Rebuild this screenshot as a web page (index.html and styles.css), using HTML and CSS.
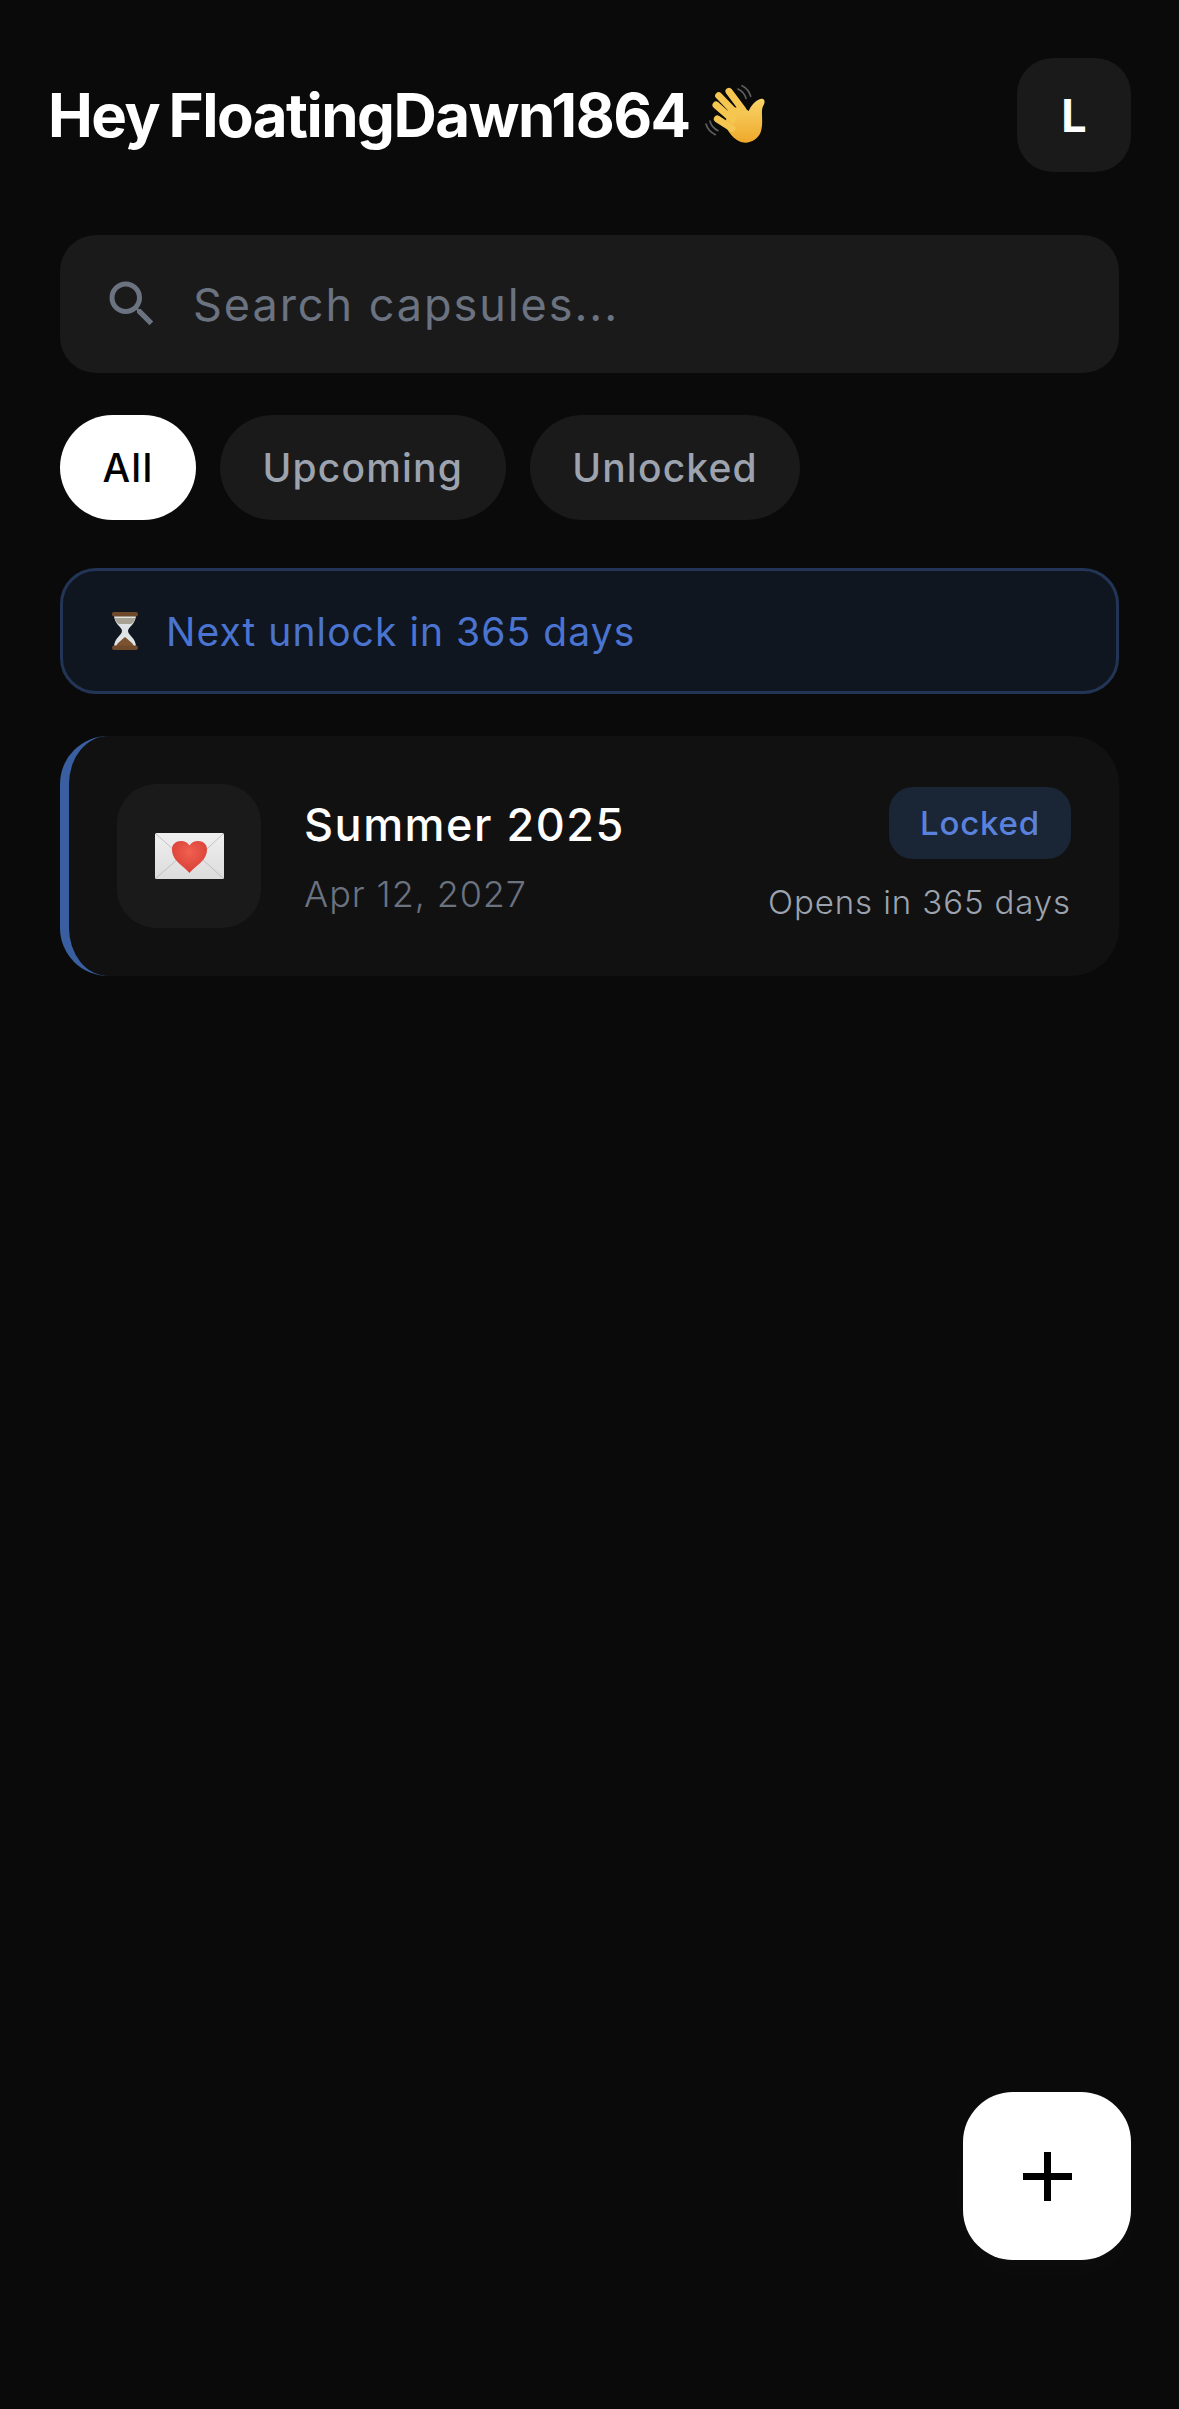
FILE: index.html
```html
<!DOCTYPE html>
<html lang="en">
<head>
    <meta charset="UTF-8">
    <meta name="viewport" content="width=device-width, initial-scale=1.0">
    <title>Capsules</title>
    <link rel="stylesheet" href="styles.css">
</head>
<body>
    <header class="header">
        <h1 class="greeting">
            <span>Hey FloatingDawn1864</span>
            <svg class="wave" viewBox="36 42 186 186" aria-hidden="true">
                <defs>
                    <linearGradient id="handFill" x1="0" y1="0" x2="0" y2="1">
                        <stop offset="0" stop-color="#f8d468"/>
                        <stop offset="1" stop-color="#efa92c"/>
                    </linearGradient>
                </defs>
                <g fill="none" stroke="#5f5f5f" stroke-width="5" stroke-linecap="round">
                    <path d="M138 60 Q156 68 162 88"/>
                    <path d="M150 50 Q170 60 176 82"/>
                    <path d="M42 165 Q48 186 70 197"/>
                    <path d="M54 156 Q58 175 78 185"/>
                </g>
                <path fill="url(#handFill)" d="M108 120 L150 112 L170 126 C177 110 190 95 205 90 C219 86 221 100 213 112 C205 130 216 160 206 190 C196 215 165 229 140 216 C120 205 105 185 100 165 Z"/>
                <g fill="none" stroke="#f5c650" stroke-width="21" stroke-linecap="round">
                    <path d="M111 67 L152 122"/>
                    <path d="M80 80 L130 132"/>
                    <path d="M72 108 L122 152"/>
                    <path d="M76 150 L120 178"/>
                </g>
            </svg>
        </h1>
        <div class="avatar">L</div>
    </header>

    <main class="content">
        <div class="search">
            <svg class="search-icon" viewBox="0 0 24 24" aria-hidden="true">
                <path d="M15.5 14h-.79l-.28-.27A6.47 6.47 0 0 0 16 9.5 6.5 6.5 0 1 0 9.5 16c1.61 0 3.09-.59 4.23-1.57l.27.28v.79l5 4.99L20.49 19l-4.99-5zm-6 0C7.01 14 5 11.99 5 9.5S7.01 5 9.5 5 14 7.01 14 9.5 11.99 14 9.5 14z"/>
            </svg>
            <span class="search-text">Search capsules...</span>
        </div>

        <div class="filters">
            <div class="pill pill-active">All</div>
            <div class="pill">Upcoming</div>
            <div class="pill">Unlocked</div>
        </div>

        <div class="banner">
            <svg class="hourglass" viewBox="0 0 28 38" aria-hidden="true">
                <path fill="#dfe3e6" d="M3 3 C3 12 11 15 11 19 C11 23 3 26 3 35 H25 C25 26 17 23 17 19 C17 15 25 12 25 3 Z"/>
                <path fill="#a8a294" d="M4 6 H24 C24 9 22 11 20 12 H8 C6 11 4 9 4 6 Z"/>
                <path fill="#7a5230" d="M5 34 C7 30 11 28 14 25 C17 28 21 30 23 34 Z"/>
                <rect fill="#6e4a2a" x="1" y="0" width="26" height="4.5" rx="2"/>
                <rect fill="#6e4a2a" x="1" y="33.5" width="26" height="4.5" rx="2"/>
            </svg>
            <span>Next unlock in 365 days</span>
        </div>

        <div class="card">
            <div class="tile">
                <svg class="envelope" viewBox="0 0 69 46" aria-hidden="true">
                    <defs>
                        <linearGradient id="paper" x1="0" y1="0" x2="0" y2="1">
                            <stop offset="0" stop-color="#efefef"/>
                            <stop offset="1" stop-color="#dcdcdc"/>
                        </linearGradient>
                        <radialGradient id="heartFill" cx="0.5" cy="0.35" r="0.7">
                            <stop offset="0" stop-color="#f0604f"/>
                            <stop offset="1" stop-color="#d63c34"/>
                        </radialGradient>
                    </defs>
                    <rect fill="url(#paper)" width="69" height="46" rx="1.5"/>
                    <path fill="none" stroke="#b4b8c0" stroke-width="0.8" d="M1 1 L30 27 M68 1 L40 27 M1 45 L24 25 M68 45 L46 25"/>
                    <path fill="url(#heartFill)" d="M34.5 40 C29 33 17 28 17 16.5 C17 11 21 8 26 8 C30 8 33 10 34.5 12.5 C36 10 39 8 43 8 C48 8 52 11 52 16.5 C52 28 40 33 34.5 40 Z"/>
                </svg>
            </div>
            <div class="card-info">
                <div class="card-title">Summer 2025</div>
                <div class="card-date">Apr 12, 2027</div>
            </div>
            <div class="card-status">
                <div class="badge">Locked</div>
                <div class="opens">Opens in 365 days</div>
            </div>
        </div>
    </main>

    <button class="fab" aria-label="New capsule">
        <svg viewBox="0 0 49 49" aria-hidden="true">
            <path d="M21 0h7v21h21v7H28v21h-7V28H0v-7h21z"/>
        </svg>
    </button>
</body>
</html>
```

FILE: styles.css
```css
* {
    box-sizing: border-box;
}
body {
    margin: 0;
    min-height: 100vh;
    position: relative;
    overflow: hidden;
    background-color: #0a0a0a;
    color: #fff;
    font-family: 'Inter', 'Liberation Sans', sans-serif;
}
.header {
    display: flex;
    align-items: center;
    justify-content: space-between;
    padding: 58px 48px 0;
}
.greeting {
    display: flex;
    align-items: center;
    gap: 14px;
    margin: 0;
    font-size: 60px;
    font-weight: 700;
    line-height: 72px;
    letter-spacing: -1.55px;
    word-spacing: -3px;
}
.wave {
    width: 62px;
    height: 62px;
    margin-top: -2px;
}
.avatar {
    display: flex;
    align-items: center;
    justify-content: center;
    width: 114px;
    height: 114px;
    border-radius: 36px;
    background-color: #1a1a1a;
    font-size: 45px;
    font-weight: 700;
}
.content {
    display: flex;
    flex-direction: column;
    padding: 63px 60px 0;
}
.search {
    display: flex;
    align-items: center;
    gap: 31px;
    height: 138px;
    padding-left: 42px;
    border-radius: 36px;
    background-color: #1a1a1a;
}
.search-icon {
    width: 60px;
    height: 60px;
    fill: #6b7280;
}
.search-text {
    color: #6b7280;
    font-size: 45px;
    letter-spacing: 1.95px;
}
.filters {
    display: flex;
    gap: 24px;
    margin-top: 42px;
}
.pill {
    display: flex;
    align-items: center;
    height: 105px;
    padding: 0 42.5px;
    border-radius: 53px;
    background-color: #1a1a1a;
    color: #9ca3af;
    font-size: 39px;
    font-weight: 500;
    letter-spacing: 1.2px;
}
.pill-active {
    background-color: #fff;
    color: #000;
}
.banner {
    display: flex;
    align-items: center;
    gap: 27px;
    height: 126px;
    margin-top: 48px;
    padding-left: 48px;
    border: 3px solid #233556;
    border-radius: 36px;
    background-color: #0f1620;
    color: #4a74d0;
    font-size: 39px;
    letter-spacing: 1.07px;
}
.hourglass {
    width: 28px;
    height: 38px;
}
.card {
    display: flex;
    align-items: center;
    height: 240px;
    margin-top: 42px;
    padding: 0 48px;
    border-left: 9px solid #3a5fa0;
    border-radius: 48px;
    background-color: #111;
}
.tile {
    display: flex;
    align-items: center;
    justify-content: center;
    width: 144px;
    height: 144px;
    border-radius: 39px;
    background-color: #1a1a1a;
}
.envelope {
    width: 69px;
    height: 46px;
}
.card-info {
    flex: 1;
    margin-left: 43px;
    padding-top: 2px;
}
.card-title {
    font-size: 45px;
    font-weight: 500;
    line-height: 54px;
    letter-spacing: 1.5px;
}
.card-date {
    margin-top: 20px;
    color: #6b7280;
    font-size: 36px;
    font-weight: 300;
    line-height: 44px;
    letter-spacing: 0.9px;
}
.card-status {
    display: flex;
    flex-direction: column;
    align-items: flex-end;
    gap: 23px;
    padding-bottom: 3px;
}
.badge {
    display: flex;
    align-items: center;
    height: 72px;
    padding: 0 31px;
    border-radius: 24px;
    background-color: #1a2535;
    color: #5a82dc;
    font-size: 33px;
    font-weight: 500;
    letter-spacing: 0.8px;
}
.opens {
    color: #9ca3af;
    font-size: 33px;
    font-weight: 300;
    line-height: 40px;
    letter-spacing: 0.9px;
}
.fab {
    position: absolute;
    right: 48px;
    bottom: 149px;
    display: flex;
    align-items: center;
    justify-content: center;
    width: 168px;
    height: 168px;
    padding: 0;
    border: none;
    border-radius: 50px;
    background-color: #fff;
    box-shadow: 0 12px 36px rgba(255, 255, 255, 0.02);
}
.fab svg {
    width: 49px;
    height: 49px;
    fill: #000;
}
```
